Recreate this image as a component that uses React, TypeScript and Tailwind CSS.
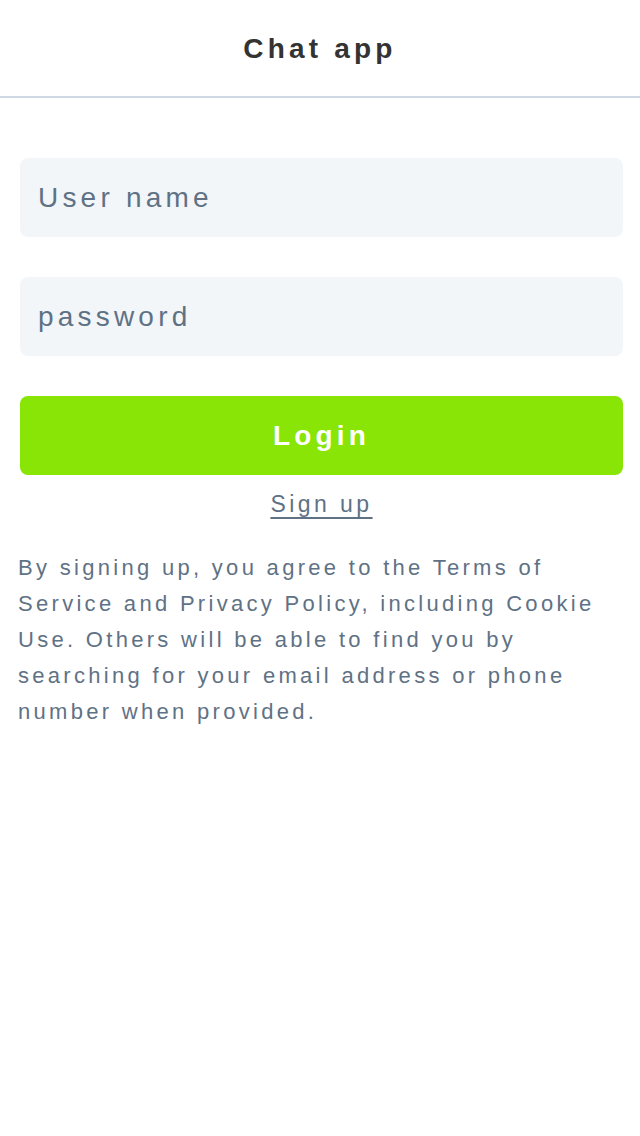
import React, { useState } from "react";

export default function App() {
  const [userName, setUserName] = useState("");
  const [password, setPassword] = useState("");

  return (
    <div className="min-h-screen bg-white font-['Liberation_Sans',Arial,sans-serif]">
      {/* Header */}
      <header className="h-[98px] flex items-center justify-center border-b-2 border-[#cfd9e3]">
        <h1 className="text-[28px] font-bold tracking-[0.15em] text-[#333333] pt-[2px]">Chat app</h1>
      </header>

      {/* Form */}
      <div className="pl-5 pr-[17px] pt-[60px] flex flex-col">
        <input
          type="text"
          value={userName}
          onChange={(e) => setUserName(e.target.value)}
          placeholder="User name"
          className="h-[79px] w-full rounded-lg bg-[#f3f6f9] px-[18px] text-[28px] tracking-[0.15em] text-[#5f7285] placeholder:text-[#5f7285] outline-none"
        />
        <input
          type="password"
          value={password}
          onChange={(e) => setPassword(e.target.value)}
          placeholder="password"
          className="mt-10 h-[79px] w-full rounded-lg bg-[#f3f6f9] px-[18px] text-[28px] tracking-[0.15em] text-[#5f7285] placeholder:text-[#5f7285] outline-none"
        />
        <button className="mt-10 h-[79px] w-full rounded-lg bg-[#88e505] text-[28px] font-bold tracking-[0.15em] text-white">
          Login
        </button>
        <div className="mt-[12px] flex justify-center">
          <a href="#" className="text-[23px] tracking-[0.15em] text-[#5f7285] underline underline-offset-[5px]">
            Sign up
          </a>
        </div>
      </div>

      <p className="pl-[18px] pr-[17px] mt-[28px] text-[22px] leading-[36px] tracking-[0.15em] text-[#5f7285]">
        By signing up, you agree to the Terms of Service and Privacy Policy, including Cookie Use. Others will be able to find you by searching for your email address or phone number when provided.
      </p>
    </div>
  );
}
